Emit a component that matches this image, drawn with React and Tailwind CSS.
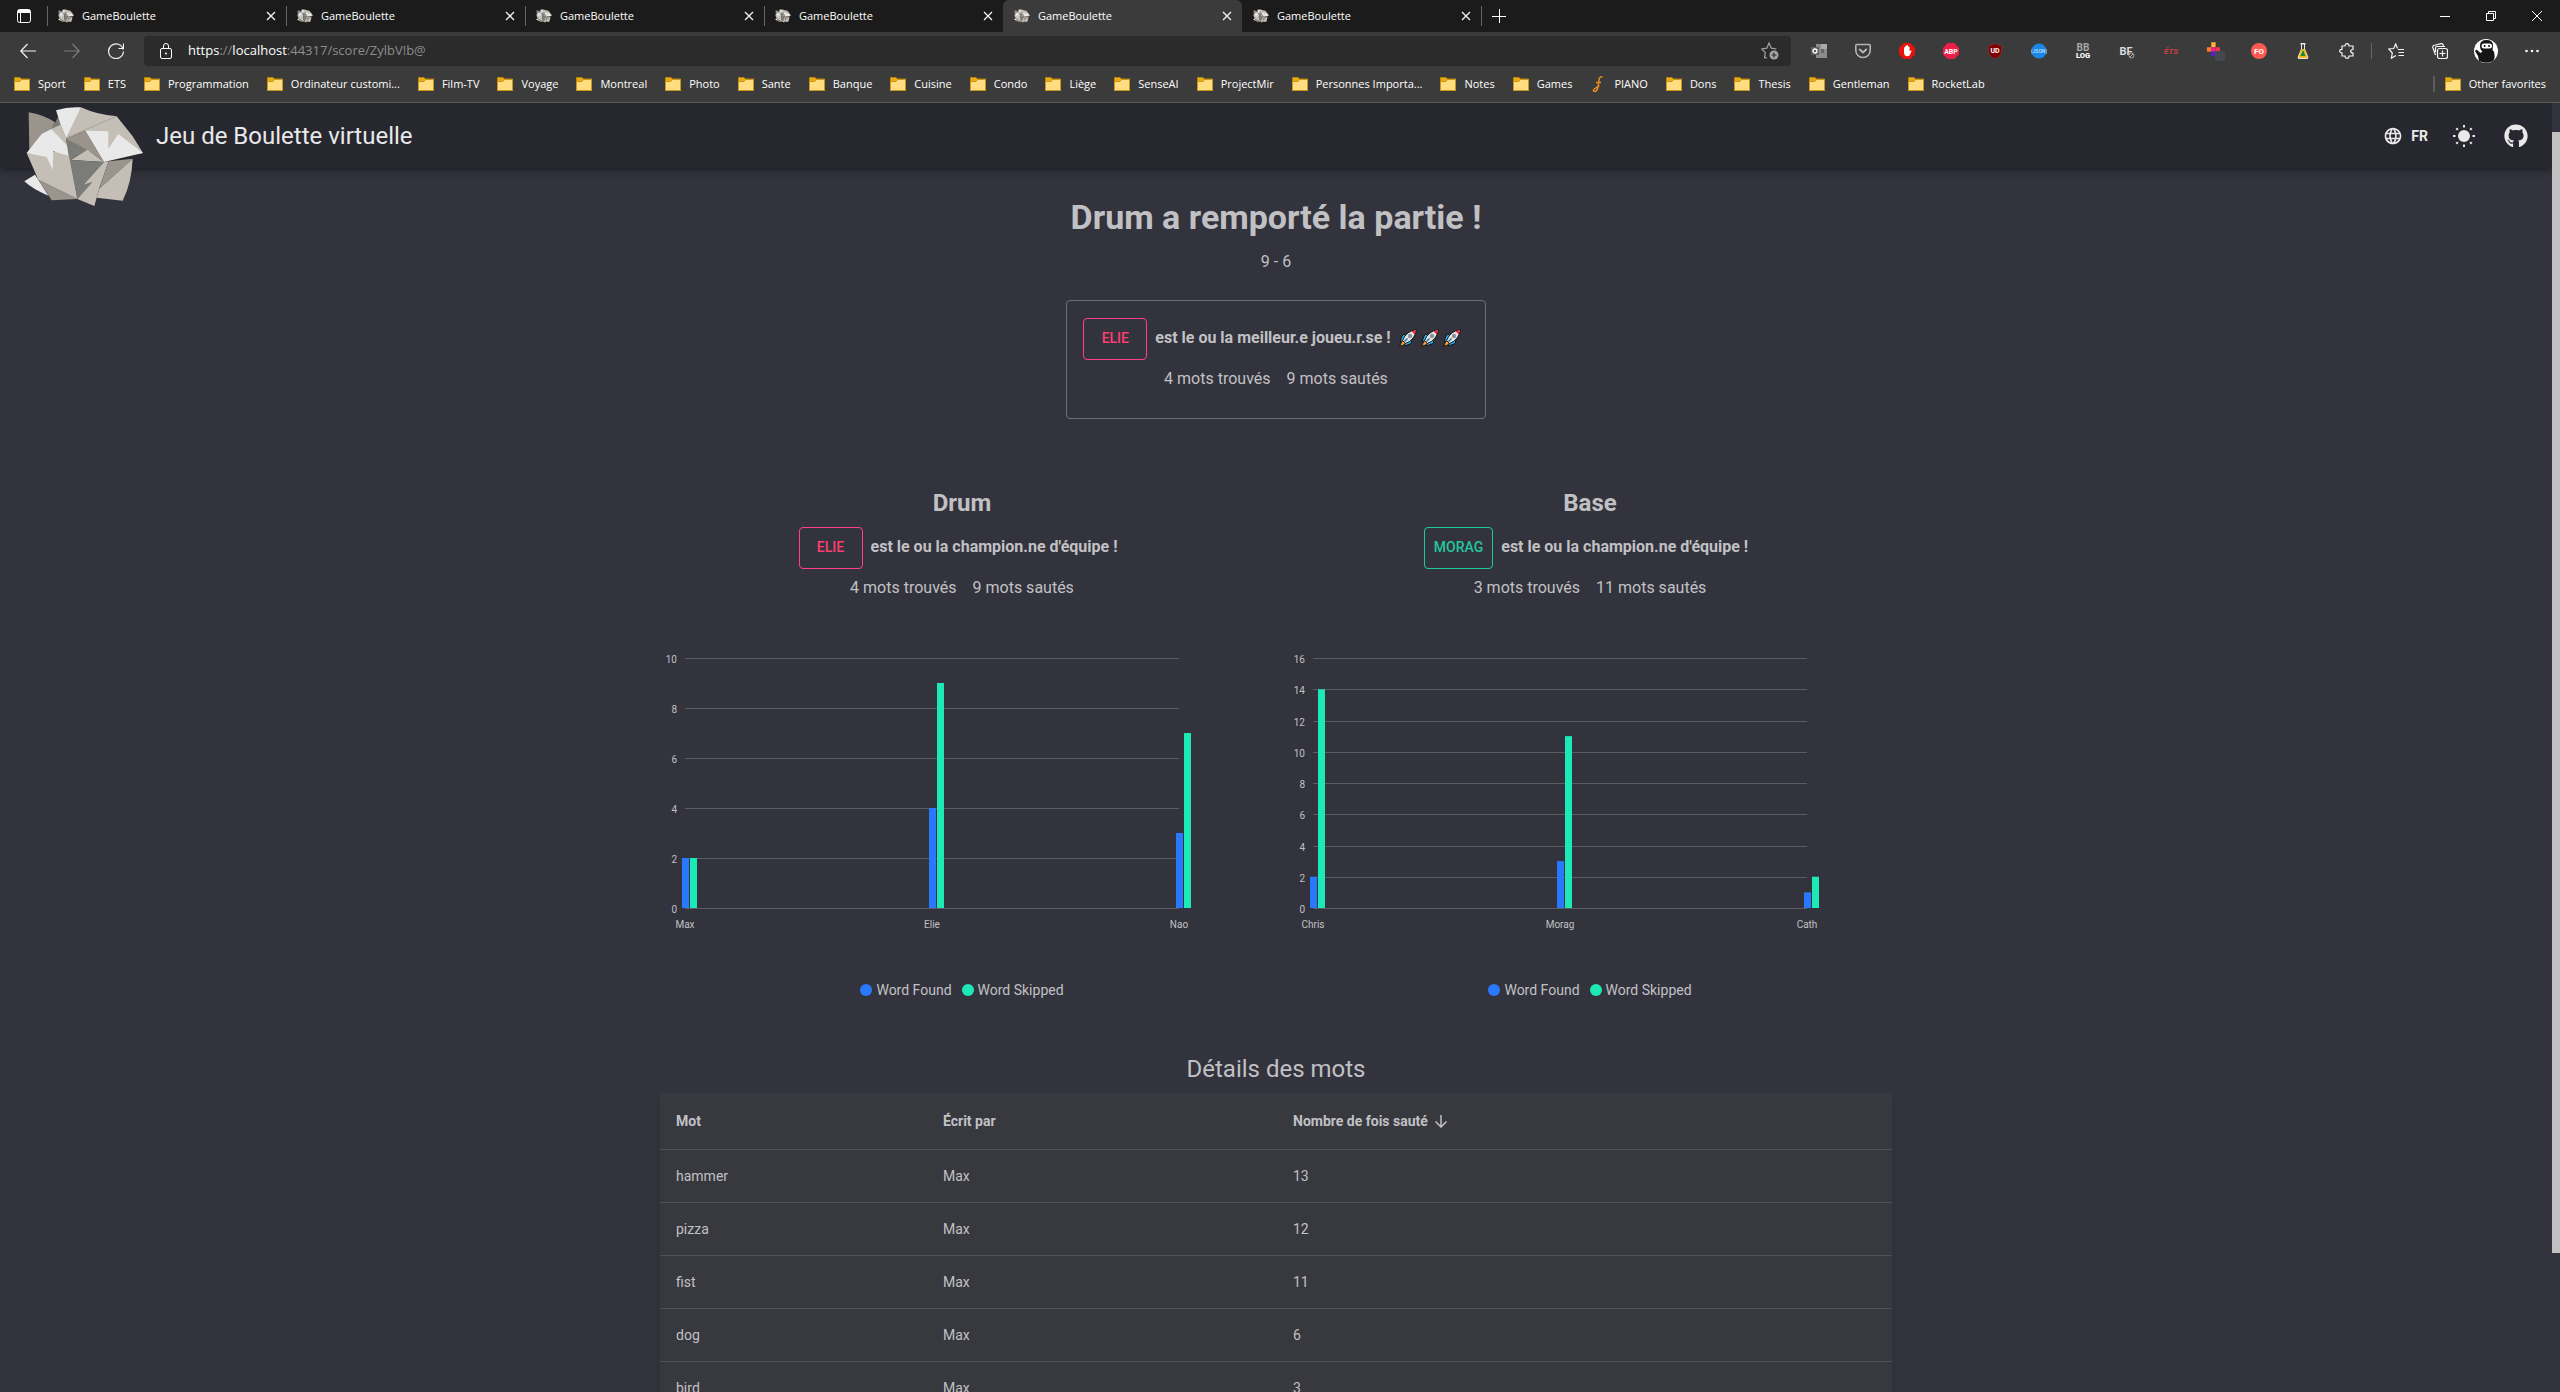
import React from "react";
import { FaGithub } from "react-icons/fa";
import { MdLanguage } from "react-icons/md";

const BEIGE = "#c4beb6";
const TAUPE = "#9a948c";
const GRAY = "#7b7b78";
const WHITE = "#e9e9e9";

function PaperBall({ className }) {
  return (
    <svg viewBox="72 319 360 302" className={className} aria-hidden="true">
      <path fill={TAUPE} d="M86 338Q130 345 165 368L155 390L125 402L88 455Z" />
      <path fill={GRAY} d="M178 345L155 387L200 418L198 390Z" />
      <path fill={BEIGE} d="M243 323Q290 345 350 350L398 410L429 460L325 475L256 393L198 418L195 400Z" />
      <path fill={WHITE} d="M168 332Q205 320 243 323L198 415L182 375Z" />
      <path fill={BEIGE} d="M155 387L182 375L198 416L205 455Z" />
      <path fill={BEIGE} d="M80 460L140 465L205 440L232 598L115 540Z" />
      <path fill={WHITE} d="M155 388L125 402L80 460L140 472L158 510L160 455L205 468L203 440Z" />
      <path fill={WHITE} d="M73 545L105 525L115 540L145 588Q100 570 73 545Z" />
      <path fill={TAUPE} d="M115 540L232 598L155 602Z" />
      <path fill={GRAY} d="M198 418L236 431L265 449L213 480L205 462Z" />
      <path fill={TAUPE} d="M198 418L256 393L312 487Q260 445 198 418Z" />
      <path fill={WHITE} d="M256 393L325 395V447L355 403L429 460L312 487Z" />
      <path fill={BEIGE} d="M262 450L312 487L213 481Z" />
      <path fill={GRAY} d="M205 460L213 481L312 487L250 556L277 547L232 598Z" />
      <path fill={BEIGE} d="M312 487L250 556L277 547L232 598L283 619L298 565L326 485Z" />
      <path fill={TAUPE} d="M326 485L398 477L298 567Z" />
      <path fill={BEIGE} d="M398 477Q395 550 368 603L290 594L298 567Z" />
      <path fill="none" stroke="#8c8780" strokeWidth="1.5" d="M350 350L198 415M236 431V463L213 445M236 463L262 450" />
    </svg>
  );
}

function Rocket() {
  return (
    <svg viewBox="0 0 18 18" className="size-[18px]" aria-hidden="true">
      <path fill="#f7a13d" stroke="#141414" d="M3.500 10.500L.6 17.400L7.500 15Z" />
      <path fill="#27b4ef" stroke="#141414" d="M9 4.500L3.500 6L1 12.500L5.500 11.500ZM13.500 9L12 14.500L5.500 17L6.500 12.500Z" />
      <path fill="#e3e4e6" stroke="#141414" d="M3.600 11.500Q7 2 17.500 .5Q16 11 6.500 14.500Z" />
      <path fill="#e8263f" d="M12 2.200L17 1L15.800 6Q14.500 3.500 12 2.200Z" />
      <circle cx="11" cy="7" r="2.200" fill="#8d9299" />
      <path stroke="#2b6d96" strokeWidth="1.500" d="M5.500 12.500L8.500 9.500" />
    </svg>
  );
}

function FolderIcon() {
  return (
    <svg viewBox="0 0 16 16" className="size-4 shrink-0" aria-hidden="true">
      <path fill="#e8ab12" d="M.5 1.500h5.500l1.500 1.500h8v11.500h-15z" stroke="#b8860b" />
      <path fill="#ffdd80" stroke="#c9971c" d="M.5 5.500h5.500l1.500-2h8v11h-15z" />
    </svg>
  );
}

const stroke = { fill: "none", stroke: "currentColor" };

function CloseIcon() {
  return (
    <svg viewBox="0 0 10 10" className="size-2.5" aria-hidden="true">
      <path {...stroke} strokeWidth="1.300" d="M1 1l8 8M9 1l-8 8" />
    </svg>
  );
}

function Tab({ active, divided }) {
  return (
    <div
      className={`flex w-[239px] items-center rounded-t-md border-l border-transparent pr-2.5 pl-2.5 ${
        active ? "bg-[#3b3b3b]" : ""
      }`}
    >
      {divided && <span className="-ml-[11px] mr-2.5 h-5 w-px bg-[#666]" />}
      <PaperBall className="size-4" />
      <button className="ml-2 flex-1 text-left text-[11px] text-white">GameBoulette</button>
      <button aria-label="Close tab" className="text-gray-100">
        <CloseIcon />
      </button>
    </div>
  );
}

function ToolButton({ label, wide, dim, children }) {
  return (
    <button
      aria-label={label}
      className={`flex h-[30px] shrink-0 items-center justify-center ${wide ? "w-12" : "w-11"} ${
        dim ? "text-[#7c7c7c]" : "text-gray-100"
      }`}
    >
      {children}
    </button>
  );
}

function Svg({ children, className = "size-4" }) {
  return (
    <svg viewBox="0 0 16 16" className={className} fontFamily="Roboto, sans-serif" textAnchor="middle" aria-hidden="true">
      {children}
    </svg>
  );
}

const extensions = [
  ["Outlook", <Svg>
    <path fill="#8b8b8b" d="M5 1h11v14H5z" />
    <path fill="#aaa" d="M10 1h6v5h-6z" />
    <path fill="#666" d="M10 6h3v4h-3z" />
    <path fill="#5d5d5d" d="M0 4h8v8H0z" />
    <circle cx="4" cy="8" r="2" fill="none" stroke="#fff" strokeWidth="1.300" />
  </Svg>],
  ["Pocket", <Svg>
    <path fill="none" stroke="#b5b5b5" strokeWidth="1.600" d="M.8 2.500q0-1 1-1h12.400q1 0 1 1v5a7.200 7 0 0 1-14.400 0z" />
    <path fill="none" stroke="#b5b5b5" strokeWidth="2" strokeLinecap="round" d="M4.800 6.500L8 9.500l3.200-3" />
  </Svg>],
  ["AdBlock", <Svg>
    <path fill="#e8130f" d="M4.700 0h6.600L16 4.700v6.600L11.300 16H4.700L0 11.300V4.700z" />
    <path fill="#fff" d="M5 4.500q.7-1 1.300 0V3q.8-1 1.400 0V2.500q.8-1 1.500 0V4q.8-1 1.400 0v4.500l1-1q1-.3.900.7L10.500 12.500Q8 14 6 12.500 5 11.500 5 9z" />
  </Svg>],
  ["Adblock Plus", <Svg>
    <path fill="#ed1e45" d="M4.700 0h6.600L16 4.700v6.600L11.300 16H4.700L0 11.300V4.700z" />
    <text x="8" y="10.500" fontSize="7" fontWeight="700" fill="#fff">ABP</text>
  </Svg>],
  ["uBlock", <Svg>
    <path fill="#800000" stroke="#9c3a3a" strokeWidth=".5" d="M8 .5Q11 2.500 14.500 2.500V8Q14.500 13 8 15.700Q1.500 13 1.500 8V2.500Q5 2.500 8 .5z" />
    <text x="8" y="9.500" fontSize="7" fontWeight="700" fill="#fff">UD</text>
  </Svg>],
  ["JSON Viewer", <Svg>
    <circle cx="8" cy="8" r="7.500" fill="#1a86e8" />
    <text x="8" y="10" fontSize="5" fontWeight="500" fill="#bfe0ff">(JSON)</text>
  </Svg>],
  ["BB Log", <Svg>
    <text x="8" y="7.500" fontSize="10" fontWeight="700" fill="#a8a8a8">BB</text>
    <text x="8" y="15" fontSize="7.500" fontWeight="900" fill="#fff">LOG</text>
  </Svg>],
  ["BF", <Svg>
    <text x="7" y="12" fontSize="11" fontWeight="700" fill="#dcdcdc">BF</text>
    <circle cx="12.500" cy="12.500" r="2.500" fill="#3b3b3b" stroke="#a8a8a8" />
    <path stroke="#a8a8a8" d="M11 14l3-3" />
  </Svg>],
  ["ETS", <Svg>
    <text x="8" y="11" fontSize="8" fontWeight="700" fontStyle="italic" fill="#cf3f46">ÉTS</text>
  </Svg>],
  ["Color cross", <Svg className="size-5">
    <path fill="#ffb52e" d="M5 1h3.500v4H5z" />
    <path fill="#ff7a2e" d="M1.500 5H5v3.500H1.500z" />
    <path fill="#ff1a8c" d="M5 5h3.500v3.500H5z" />
    <path fill="#e83a4a" d="M8.500 5H12v3.500H8.500z" />
    <path fill="#5a1fd0" d="M5 8.500h3.500V12H5z" />
    <rect x="8" y="8" width="8" height="8" rx="1" fill="#43494f" />
  </Svg>],
  ["FO", <Svg>
    <circle cx="8" cy="8" r="8" fill="#ff5a52" />
    <text x="8" y="11" fontSize="8" fontWeight="700" fill="#fff">FO</text>
  </Svg>],
  ["Flask", <Svg>
    <path fill="#e9e9e9" d="M5.500 0h5v1.500H10V6l3.300 8q.2 2-1.300 2H4q-1.500 0-1.300-2L6 6V1.500h-.5z" />
    <path fill="#3b3b3b" d="M7 1.500h2V6H7z" />
    <path fill="#f7b81c" d="M6.500 6h3l3 8q0 1-1 1h-7q-1 0-1-1z" />
    <path fill="#138a3c" d="M8 7l2.500 6h-5z" />
  </Svg>],
  ["Extensions", <Svg>
    <path {...stroke} strokeWidth="1.200" d="M3 3h3q0-2.300 2-2.300T10 3h4v3.500q-2.300 0-2.300 1.700T14 10v3h-4q0 2.300-2 2.300T6 13H3V9.800q-2.300 0-2.300-1.700T3 6.400z" />
  </Svg>],
];

const bookmarks = [
  "Sport", "ETS", "Programmation", "Ordinateur customi...", "Film-TV", "Voyage", "Montreal", "Photo",
  "Sante", "Banque", "Cuisine", "Condo", "Liège", "SenseAI", "ProjectMir", "Personnes Importa...",
  "Notes", "Games", "PIANO", "Dons", "Thesis", "Gentleman", "RocketLab",
];

function Bookmark({ name }) {
  return (
    <a href="#" className="flex shrink-0 items-center gap-2 text-[11px] whitespace-nowrap text-white">
      {name === "PIANO" ? (
        <svg viewBox="0 0 16 16" className="size-4" aria-hidden="true">
          <path fill="none" stroke="#f28c1c" strokeWidth="1.400" d="M12.500 1Q9.500 0 9 4L8 11Q7 16 4.500 15.500T5 12.500L9.500 9.500M6 6.500h5" />
        </svg>
      ) : (
        <FolderIcon />
      )}
      {name}
    </a>
  );
}

function Browser() {
  return (
    <header className="shrink-0 border-b border-[#5c5c5c] bg-[#3b3b3b] font-['Open_Sans','Noto_Sans',sans-serif]">
      <div className="flex h-8 bg-[#1b1b1b]">
        <button aria-label="Tab actions" className="flex w-[47px] items-center justify-center text-white">
          <svg viewBox="0 0 14 14" className="size-3.5" aria-hidden="true">
            <rect {...stroke} x=".5" y=".5" width="13" height="13" rx="2" />
            <path fill="currentColor" d="M1 1h12v3H1z" />
            <path {...stroke} d="M3.500 4v9.500" />
          </svg>
        </button>
        <Tab divided />
        <Tab divided />
        <Tab divided />
        <Tab divided />
        <Tab active />
        <Tab />
        <div className="flex items-center">
          <span className="h-5 w-px bg-[#666]" />
          <button aria-label="New tab" className="ml-2.5 text-white">
            <svg viewBox="0 0 14 14" className="size-3.5" aria-hidden="true">
              <path {...stroke} d="M0 7.500h14M7.500 0v14" />
            </svg>
          </button>
        </div>
        <div className="ml-auto flex items-center text-white">
          <button aria-label="Minimize" className="flex h-7 w-[46px] items-center justify-center">
            <svg viewBox="0 0 10 10" className="size-2.5" aria-hidden="true"><path {...stroke} d="M0 5.500h10" /></svg>
          </button>
          <button aria-label="Restore" className="flex h-7 w-[46px] items-center justify-center">
            <svg viewBox="0 0 10 10" className="size-2.5" aria-hidden="true"><path {...stroke} d="M.5 2.500h7v7h-7zM2.500 2.500v-2h7v7h-2" /></svg>
          </button>
          <button aria-label="Close" className="flex h-7 w-[46px] items-center justify-center">
            <svg viewBox="0 0 10 10" className="size-2.5" aria-hidden="true"><path {...stroke} d="M0 0l10 10M10 0l-10 10" /></svg>
          </button>
        </div>
      </div>

      <div className="flex items-center px-1.5 pt-1">
        <ToolButton label="Back">
          <Svg><path {...stroke} strokeWidth="1.200" d="M16 8H.8M7.500 1L.8 8l6.700 7" /></Svg>
        </ToolButton>
        <ToolButton label="Forward" dim>
          <Svg><path {...stroke} strokeWidth="1.200" d="M0 8h15.200M8.500 1l6.700 7-6.700 7" /></Svg>
        </ToolButton>
        <ToolButton label="Refresh">
          <Svg><path {...stroke} strokeWidth="1.200" d="M15.200 6.500A7.400 7.400 0 1 0 15.400 8.500M15.500 .5V5.500H10.500" /></Svg>
        </ToolButton>
        <div className="ml-1.5 flex h-[30px] flex-1 items-center rounded bg-[#2b2b2b] pl-3.5 pr-3">
          <svg viewBox="0 0 16 16" className="size-4 text-white" aria-hidden="true">
            <rect {...stroke} x="2.500" y="5.500" width="11" height="10" rx="1.500" />
            <path {...stroke} d="M5.500 5.500V3a2.500 2.500 0 0 1 5 0v2.500" />
            <circle cx="8" cy="10.500" r="1" fill="currentColor" />
          </svg>
          <div className="ml-3.5 flex-1 text-[13px] text-[#8d8d8d]">
            <span className="text-white">https</span>://<span className="text-white">localhost</span>:44317/score/ZylbV!b@
          </div>
          <button aria-label="Add to favorites" className="text-[#a5a5a5]">
            <svg viewBox="0 0 18 18" className="size-[18px]" aria-hidden="true">
              <path {...stroke} strokeWidth="1.200" d="M6 16l-2.500-.3.800-5L.8 7l5-.8L8 1l2.300 5.200 5 .8" />
              <circle cx="13" cy="13" r="4.500" fill="currentColor" />
              <path stroke="#2b2b2b" strokeWidth="1.200" d="M10.500 13h5M13 10.500v5" />
            </svg>
          </button>
        </div>
        <div className="ml-1.5 flex items-center">
          {extensions.map(([label, icon]) => (
            <ToolButton key={label} label={label}>{icon}</ToolButton>
          ))}
          <span className="mx-0.5 h-4 w-px bg-[#666]" />
          <ToolButton label="Favorites">
            <Svg>
              <path {...stroke} strokeWidth="1.200" d="M9.500 5.500L7.700 1 5.700 5.500.8 6l3.500 4L3.400 15.200 8 12.500M10 6.500h6M10.500 9.500H16M10.500 12.500H16" />
            </Svg>
          </ToolButton>
          <ToolButton label="Collections">
            <Svg>
              <rect {...stroke} strokeWidth="1.200" x="5.500" y="5.500" width="10" height="10" rx="2" />
              <path {...stroke} strokeWidth="1.200" d="M10.500 7.500v6M7.500 10.500h6M3.500 12L.8 4.500q-.4-1.500 1-2L9 .7q1.500-.2 2 1L11.500 3.500M3.500 9V5Q3.500 3.500 5 3.500H13" />
            </Svg>
          </ToolButton>
          <ToolButton label="Profile" wide>
            <svg viewBox="0 0 24 24" className="size-6" aria-hidden="true">
              <circle cx="12" cy="12" r="12" fill="#fff" />
              <path fill="#151515" d="M6 6.500Q6 1 12.500 1T19 6.500L18.500 11Q21 13 20.500 19L19 22Q12 25.500 5 22L4 17L1 12l1.500-1.500L6.500 14 8.500 12.500Q6 11 6 6.500z" />
              <rect x="7.500" y="4.500" width="10.500" height="5" rx="2.500" fill="#fff" />
              <circle cx="10.700" cy="7" r="1" fill="#151515" />
              <circle cx="15" cy="7" r="1" fill="#151515" />
            </svg>
          </ToolButton>
          <ToolButton label="More">
            <Svg>
              <circle cx="2.500" cy="8" r="1.300" fill="currentColor" />
              <circle cx="8" cy="8" r="1.300" fill="currentColor" />
              <circle cx="13.500" cy="8" r="1.300" fill="currentColor" />
            </Svg>
          </ToolButton>
        </div>
      </div>

      <nav className="flex h-9 items-center gap-[18px] px-3.5">
        {bookmarks.map((name) => (
          <Bookmark key={name} name={name} />
        ))}
        <div className="ml-auto flex items-center gap-2.5">
          <span className="h-4 w-0.5 bg-[#5c5c5c]" />
          <Bookmark name="Other favorites" />
        </div>
      </nav>
    </header>
  );
}

function AppBar() {
  return (
    <div className="z-10 flex h-[65px] shrink-0 items-center bg-[#27272f] px-6 text-[#e9e9ea] shadow-[0_2px_4px_-1px_rgba(0,0,0,0.2),0_4px_5px_0_rgba(0,0,0,0.14),0_1px_10px_0_rgba(0,0,0,0.12)]">
      <div className="relative h-full w-[120px]">
        <PaperBall className="absolute top-[3px] left-0 w-[120px]" />
      </div>
      <h1 className="ml-3 text-2xl">Jeu de Boulette virtuelle</h1>
      <div className="ml-auto flex items-center">
        <button className="flex items-center gap-2 text-sm font-bold">
          <MdLanguage className="size-5" />
          FR
        </button>
        <button aria-label="Toggle theme" className="ml-6">
          <svg viewBox="0 0 24 24" className="size-6" aria-hidden="true">
            <circle cx="12" cy="12" r="6" fill="currentColor" />
            <path
              {...stroke}
              strokeWidth="2"
              d="M12 1v2.500M12 20.500V23M1 12h2.500M20.500 12H23M4.300 4.300l1.600 1.600M18.100 18.100l1.600 1.600M4.300 19.700l1.600-1.600M18.100 5.900l1.600-1.600"
            />
          </svg>
        </button>
        <a href="#" aria-label="GitHub" className="ml-7">
          <FaGithub className="size-6" />
        </a>
      </div>
    </div>
  );
}

function Champion({ name, pink, text, found, skipped, children }) {
  return (
    <div className="flex flex-col items-center">
      <div className="flex gap-2 pr-2">
        <button
          className={`h-[42px] min-w-16 rounded border px-[9px] pb-0.5 text-sm font-medium ${
            pink ? "border-[#ff4081] text-[#ff3d71]" : "border-[#1fc8a0] text-[#22c79f]"
          }`}
        >
          {name}
        </button>
        <p className="leading-10 font-bold">{text}</p>
        {children}
      </div>
      <p className="mt-[7px] flex gap-4">
        <span>{found} mots trouvés</span>
        <span>{skipped} mots sautés</span>
      </p>
    </div>
  );
}

function Chart({ max, data }) {
  const left = 25;
  const right = 519;
  const bottom = 260;
  const height = 250;
  const y = (v) => bottom - (v / max) * height;
  const ticks = Array.from({ length: max / 2 + 1 }, (_, i) => i * 2);
  return (
    <svg viewBox="0 0 604 302" className="mt-12 w-full" fontFamily="Roboto, sans-serif" fontSize="10" fill="#c1c1c4">
      {ticks.map((t) => (
        <g key={t}>
          <line x1={left} x2={right} y1={Math.round(y(t)) + 0.5} y2={Math.round(y(t)) + 0.5} stroke="#5b5b63" />
          <text x="17" y={Math.round(y(t)) + 5} textAnchor="end">{t}</text>
        </g>
      ))}
      {data.map(([name, found, skipped], i) => {
        const x = left + (i * (right - left)) / (data.length - 1);
        return (
          <g key={name}>
            <rect x={x - 3} y={y(found)} width="7" height={bottom - y(found)} fill="#2979ff" />
            <rect x={x + 5} y={y(skipped)} width="7" height={bottom - y(skipped)} fill="#1de9b6" />
            <text x={x} y="280" textAnchor="middle">{name}</text>
          </g>
        );
      })}
    </svg>
  );
}

function Team({ title, max, data, ...champion }) {
  return (
    <section className="flex flex-col">
      <h3 className="mb-2 text-center text-2xl font-bold">{title}</h3>
      <Champion text="est le ou la champion.ne d'équipe !" {...champion} />
      <Chart max={max} data={data} />
      <ul className="mt-[30px] flex justify-center gap-2.5 text-sm">
        <li className="flex items-center gap-1">
          <span className="size-3 rounded-full bg-[#2979ff]" />
          Word Found
        </li>
        <li className="flex items-center gap-1">
          <span className="size-3 rounded-full bg-[#1de9b6]" />
          Word Skipped
        </li>
      </ul>
    </section>
  );
}

const words = [
  ["hammer", "Max", 13],
  ["pizza", "Max", 12],
  ["fist", "Max", 11],
  ["dog", "Max", 6],
  ["bird", "Max", 3],
];

function WordTable() {
  return (
    <table className="mt-2 w-full table-fixed rounded bg-[#38383f] text-left text-sm shadow-md">
      <thead>
        <tr className="border-b border-[#515154]">
          <th className="w-[267px] p-4 font-bold">Mot</th>
          <th className="w-[350px] p-4 font-bold">Écrit par</th>
          <th className="p-4 font-bold">
            <button className="flex items-center gap-1.5 leading-6">
              Nombre de fois sauté
              <svg viewBox="0 0 14 14" className="size-3.5" aria-hidden="true">
                <path {...stroke} strokeWidth="1.500" d="M7 1v11.500M1.500 7.500L7 13l5.500-5.500" />
              </svg>
            </button>
          </th>
        </tr>
      </thead>
      <tbody>
        {words.map(([word, author, count]) => (
          <tr key={word} className="border-b border-[#515154]">
            <td className="p-4">{word}</td>
            <td className="p-4">{author}</td>
            <td className="p-4">{count}</td>
          </tr>
        ))}
      </tbody>
    </table>
  );
}

export default function App() {
  return (
    <div className="flex h-screen flex-col overflow-hidden bg-[#33333d] font-[Roboto,sans-serif] text-[#c1c1c4]">
      <Browser />
      <div className="flex min-h-0 flex-1">
        <div className="flex min-w-0 flex-1 flex-col overflow-hidden">
          <AppBar />
          <main className="mx-auto w-full max-w-[1280px] px-6 pt-7">
            <h2 className="text-center text-[34px] leading-[42px] font-bold">Drum a remporté la partie !</h2>
            <p className="mt-3 text-center">9 - 6</p>
            <div className="mx-auto mt-[26px] w-[420px] rounded border border-[#6d6d75] pt-[17px] pb-[27px]">
              <Champion pink name="ELIE" text="est le ou la meilleur.e joueu.r.se !" found={4} skipped={9}>
                <span className="flex h-10 items-center gap-1">
                  <Rocket />
                  <Rocket />
                  <Rocket />
                </span>
              </Champion>
            </div>
            <div className="mt-[68px] grid grid-cols-2 gap-6">
              <Team
                title="Drum"
                pink
                name="ELIE"
                found={4}
                skipped={9}
                max={10}
                data={[["Max", 2, 2], ["Elie", 4, 9], ["Nao", 3, 7]]}
              />
              <Team
                title="Base"
                name="MORAG"
                found={3}
                skipped={11}
                max={16}
                data={[["Chris", 2, 14], ["Morag", 3, 11], ["Cath", 1, 2]]}
              />
            </div>
            <h3 className="mt-[53px] text-center text-2xl">Détails des mots</h3>
            <WordTable />
          </main>
        </div>
        <div className="w-2 shrink-0 bg-[#33333d] pt-[29px]">
          <div className="h-[89%] bg-[#c1c1c1]" />
        </div>
      </div>
    </div>
  );
}
